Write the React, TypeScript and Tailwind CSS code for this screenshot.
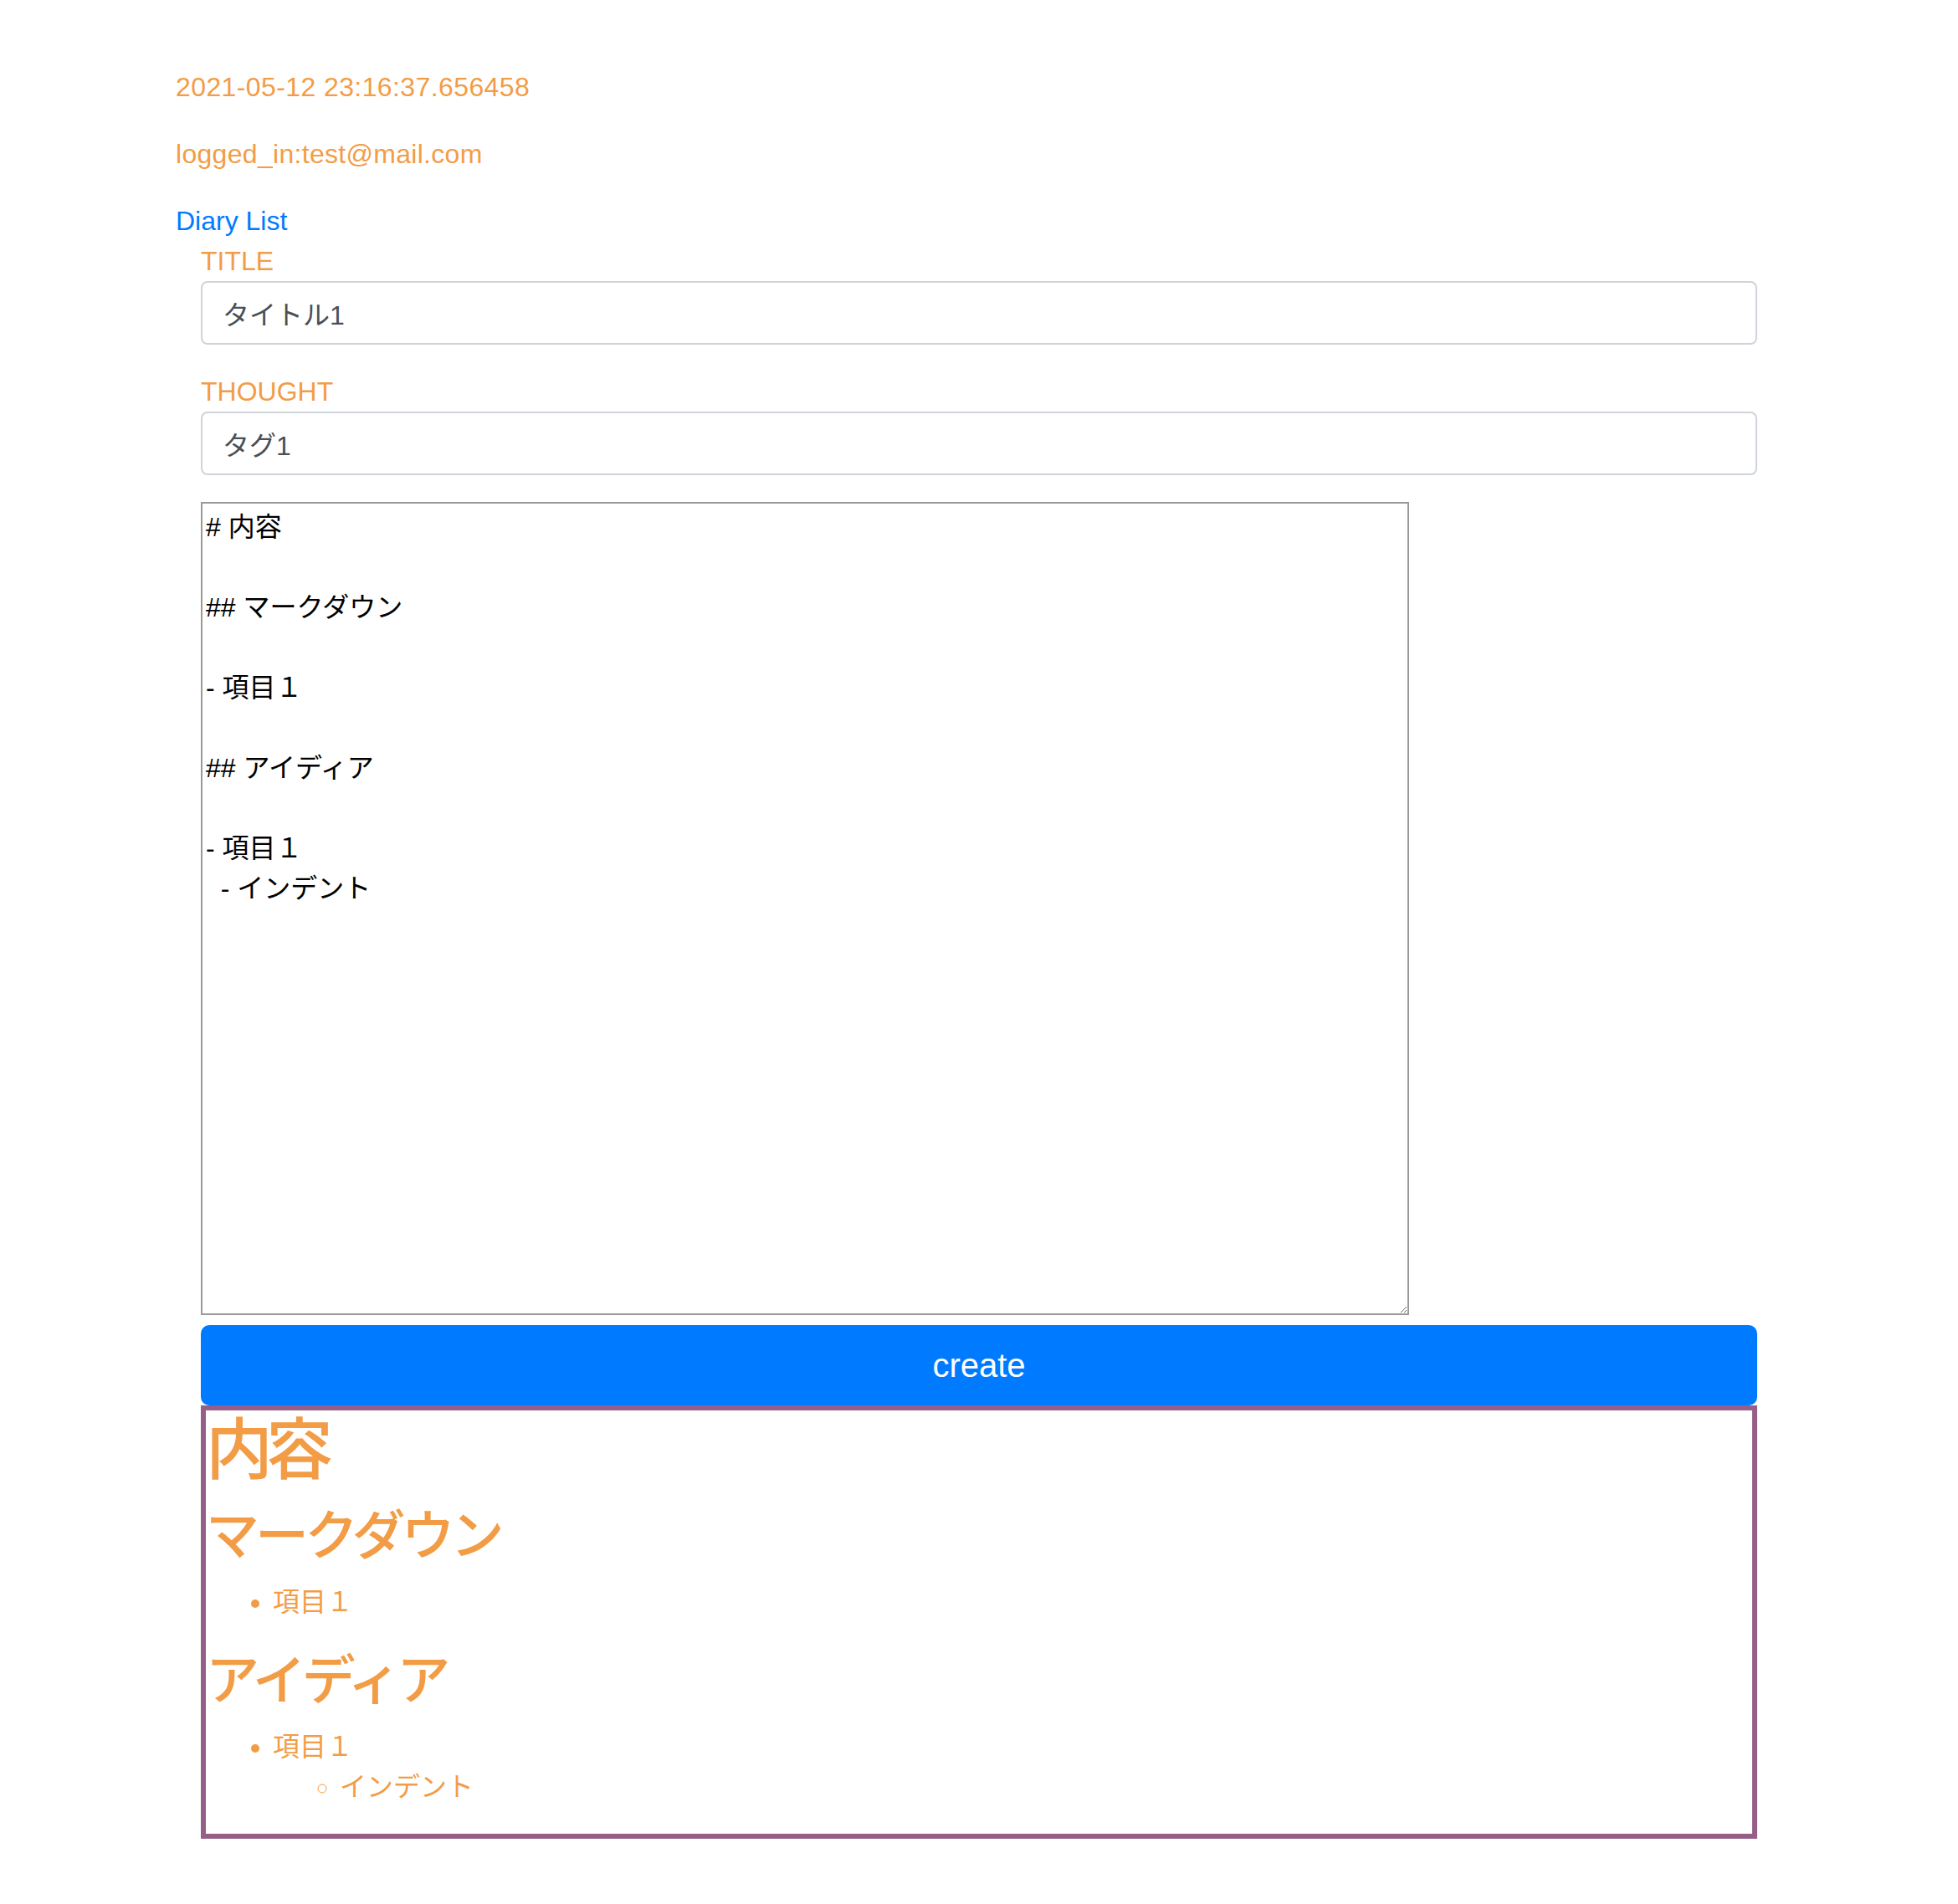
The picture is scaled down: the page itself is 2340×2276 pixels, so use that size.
const body = '"Liberation Sans", "Noto Sans CJK JP", sans-serif';

const memo = `# 内容

## マークダウン

- 項目１

## アイディア

- 項目１
  - インデント`;

function Field({ label, value }: { label: string; value: string }) {
  return (
    <div className="mb-[32px]">
      <label className="block text-[32px] leading-[48px] text-[#f39c46]">{label}</label>
      <input
        readOnly
        value={value}
        className="block h-[76px] w-full rounded-[8px] border-2 border-[#ced4da] bg-white px-[24px] text-[32px] leading-[48px] text-[#495057] outline-none"
        style={{ fontFamily: body }}
      />
    </div>
  );
}

export default function App() {
  return (
    <div className="min-h-[2276px] bg-white pt-[80px]" style={{ fontFamily: body }}>
      <div className="pl-[210px]">
        <p className="mb-[32px] text-[32px] leading-[48px] tracking-[0.4px] text-[#f39c46]">2021-05-12 23:16:37.656458</p>
        <p className="mb-[32px] text-[32px] leading-[48px] tracking-[0.3px] text-[#f39c46]">logged_in:test@mail.com</p>
        <a href="#" className="block text-[32px] leading-[48px] text-[#007bff]">
          Diary List
        </a>
      </div>

      <div className="ml-[240px] w-[1860px]">
        <Field label="TITLE" value="タイトル1" />
        <Field label="THOUGHT" value="タグ1" />

        <textarea
          readOnly
          defaultValue={memo}
          className="block h-[972px] w-[1444px] border-2 border-[#999999] bg-white p-[4px] text-[32px] leading-[48px] text-black outline-none"
          style={{ fontFamily: body }}
        />

        <button className="mt-[12px] block h-[96px] w-full rounded-[10px] bg-[#007bff] text-[40px] leading-[60px] text-white">
          create
        </button>

        <div className="border-[6px] border-[#955f87] text-[#f39c46]">
          <h1 className="mb-[16px] text-[80px] leading-[96px] font-medium tracking-[-8px]">内容</h1>
          <h2 className="mb-[16px] text-[64px] leading-[77px] font-medium tracking-[-5px]">マークダウン</h2>
          <ul className="mb-[32px] list-disc pl-[80px] text-[32px] leading-[48px]">
            <li>項目１</li>
          </ul>
          <h2 className="mb-[16px] text-[64px] leading-[77px] font-medium tracking-[-5px]">アイディア</h2>
          <ul className="mb-[32px] list-disc pl-[80px] text-[32px] leading-[48px]">
            <li>
              項目１
              <ul className="list-[circle] pl-[80px]">
                <li>インデント</li>
              </ul>
            </li>
          </ul>
        </div>
      </div>
    </div>
  );
}
